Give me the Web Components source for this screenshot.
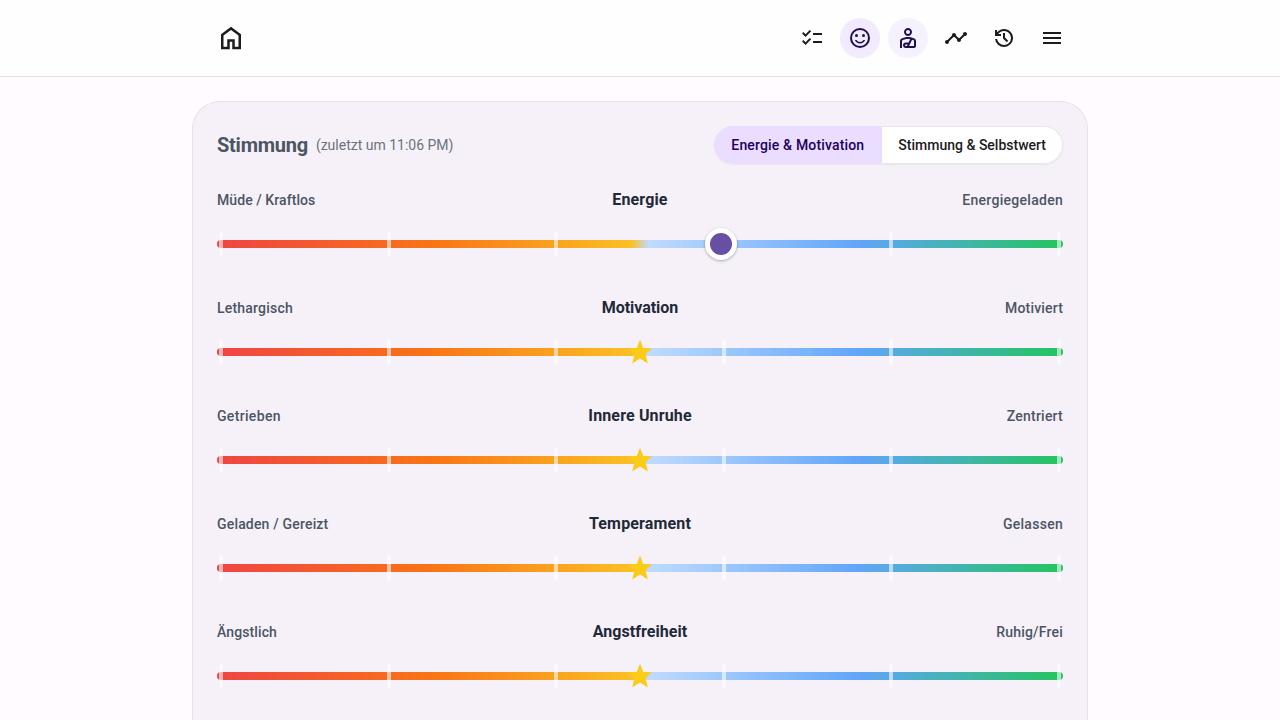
<!DOCTYPE html>
<html lang="de">
<head>
<meta charset="utf-8">
<title>Stimmung</title>
<style>
html,body{margin:0;height:100%;overflow:hidden}
body{background:#fffbff;font-family:Roboto,sans-serif;font-size:16px;line-height:24px;color:#1c1b1f}
</style>
</head>
<body>
<mood-app></mood-app>
<script>
const ICONS = {
  home: ['0 -960 960 960', '<path d="M240-200h120v-240h240v240h120v-360L480-740 240-560v360Zm-80 80v-480l320-240 320 240v480H520v-240h-80v240H160Z"/>'],
  checklist: ['0 -960 960 960', '<path d="M222-200 80-342l56-56 85 85 170-170 56 57-225 226Zm0-320L80-662l56-56 85 85 170-170 56 57-225 226Zm298 240v-80h360v80H520Zm0-320v-80h360v80H520Z"/>'],
  mood: ['0 0 24 24', '<circle cx="15.5" cy="9.5" r="1.5"/><circle cx="8.5" cy="9.5" r="1.5"/><path d="M12 16c-1.48 0-2.75-.81-3.45-2H6.88a5.495 5.495 0 0 0 10.24 0h-1.67c-.69 1.19-1.97 2-3.45 2z"/><circle cx="12" cy="12" r="9" fill="none" stroke="currentColor" stroke-width="2"/>'],
  injury: ['0 0 24 24', '<path d="M12,10c2.21,0,4-1.79,4-4s-1.79-4-4-4C9.79,2,8,3.79,8,6S9.79,10,12,10z M12,4c1.1,0,2,0.9,2,2s-0.9,2-2,2s-2-0.9-2-2S10.9,4,12,4z"/><path d="M18.39,12.56C16.71,11.7,14.53,11,12,11s-4.71,0.7-6.39,1.56C4.61,13.07,4,14.1,4,15.22V22h2v-6.78c0-0.38,0.2-0.72,0.52-0.88C7.71,13.73,9.63,13,12,13c0.76,0,1.47,0.07,2.13,0.2l-1.55,3.3H9.75C8.23,16.5,7,17.73,7,19.25C7,20.77,8.23,22,9.75,22h2.18H18c1.1,0,2-0.9,2-2v-4.78C20,14.1,19.39,13.07,18.39,12.56z M10.94,20H9.75C9.34,20,9,19.66,9,19.25c0-0.41,0.34-0.75,0.75-0.75h1.89L10.94,20z M18,20h-4.85l2.94-6.27c0.54,0.2,1.01,0.41,1.4,0.61C17.8,14.5,18,14.84,18,15.22V20z"/>'],
  timeline: ['0 0 24 24', '<path d="M23 8c0 1.1-.9 2-2 2-.18 0-.35-.02-.51-.07l-3.56 3.55c.05.16.07.34.07.52 0 1.1-.9 2-2 2s-2-.9-2-2c0-.18.02-.36.07-.52l-2.55-2.55c-.16.05-.34.07-.52.07s-.36-.02-.52-.07l-4.55 4.56c.05.16.07.33.07.51 0 1.1-.9 2-2 2s-2-.9-2-2 .9-2 2-2c.18 0 .35.02.51.07l4.56-4.55C8.02 9.36 8 9.18 8 9c0-1.1.9-2 2-2s2 .9 2 2c0 .18-.02.36-.07.52l2.55 2.55c.16-.05.34-.07.52-.07s.36.02.52.07l3.55-3.56C19.02 8.35 19 8.18 19 8c0-1.1.9-2 2-2s2 .9 2 2z"/>'],
  history: ['0 -960 960 960', '<path d="M480-120q-138 0-240.5-91.5T122-440h82q14 104 92.5 172T480-200q117 0 198.5-81.5T760-480q0-117-81.5-198.5T480-760q-69 0-129 32t-101 88h110v80H120v-240h80v94q51-64 124.5-99T480-840q75 0 140.5 28.5t114 77q48.5 48.5 77 114T840-480q0 75-28.5 140.5t-77 114q-48.5 48.5-114 77T480-120Zm112-192L440-464v-216h80v184l128 128-56 56Z"/>'],
  menu: ['0 -960 960 960', '<path d="M120-240v-80h720v80H120Zm0-200v-80h720v80H120Zm0-200v-80h720v80H120Z"/>'],
  star: ['0 0 24 24', '<path d="M12 -.2l3.2 8.3 8.8.4-6.6 5.7 2.5 9.2-7.9-4.9-7.9 4.9 2.5-9.2L0 8.5l8.8-.4z"/>']
};

class AppIcon extends HTMLElement {
  connectedCallback() {
    const [box, body] = ICONS[this.getAttribute('name')];
    this.attachShadow({mode: 'open'}).innerHTML = `<style>
      :host{display:block;width:var(--icon-size,24px);height:var(--icon-size,24px)}
      svg{display:block;width:100%;height:100%;fill:currentColor;overflow:visible}
    </style><svg viewBox="${box}" aria-hidden="true">${body}</svg>`;
  }
}
customElements.define('app-icon', AppIcon);

class IconButton extends HTMLElement {
  connectedCallback() {
    this.attachShadow({mode: 'open'}).innerHTML = `<style>
      :host{display:block}
      button{all:unset;display:grid;place-items:center;width:40px;height:40px;border-radius:50%;background:var(--tone,transparent);color:var(--ink,#1c1b1f)}
    </style><button aria-label="${this.getAttribute('icon')}"><app-icon name="${this.getAttribute('icon')}"></app-icon></button>`;
  }
}
customElements.define('icon-button', IconButton);

class TopBar extends HTMLElement {
  connectedCallback() {
    this.attachShadow({mode: 'open'}).innerHTML = `<style>
      :host{display:block;box-sizing:border-box;height:77px;background:#fefefe;border-bottom:1px solid #e5e1e9}
      header{box-sizing:border-box;width:896px;height:76px;margin:0 auto;padding:0 16px 0 19px;display:flex;align-items:center;justify-content:space-between}
      nav{display:flex;gap:8px}
      .home{--icon-size:30px;width:40px;display:grid;place-items:center}
    </style><header><icon-button class="home" icon="home"></icon-button><nav>
      <icon-button icon="checklist"></icon-button>
      <icon-button icon="mood" style="--tone:#f2eaff;--ink:#21104a"></icon-button>
      <icon-button icon="injury" style="--tone:#f5f1ff;--ink:#21104a"></icon-button>
      <icon-button icon="timeline"></icon-button>
      <icon-button icon="history"></icon-button>
      <icon-button icon="menu"></icon-button>
    </nav></header>`;
  }
}
customElements.define('top-bar', TopBar);

class SegmentedTabs extends HTMLElement {
  connectedCallback() {
    this.attachShadow({mode: 'open'}).innerHTML = `<style>
      :host{display:flex;border-radius:20px;box-shadow:0 1px 2px rgba(0,0,0,.05)}
      ::slotted(button){appearance:none;box-sizing:border-box;margin:0;height:38px;padding:0 16px;border:1px solid #e5e7eb;background:#fff;color:#1c1b1f;font:500 14px/20px Roboto,sans-serif}
      ::slotted(button:first-child){width:168px;text-align:left;border-radius:19px 0 0 19px;letter-spacing:.16px;white-space:nowrap}
      ::slotted(button:last-child){border-radius:0 19px 19px 0;border-left:0}
      ::slotted(button[aria-pressed=true]){background:#eaddff;border-color:#eaddff;color:#21005d}
    </style><slot></slot>`;
  }
}
customElements.define('segmented-tabs', SegmentedTabs);

class MoodSlider extends HTMLElement {
  connectedCallback() {
    const value = this.getAttribute('value');
    const [lowGap, titleGap, highGap] = this.getAttribute('tracking').split(' ');
    const marker = value
      ? `<span class="thumb" style="left:${value}px"></span>`
      : '<app-icon class="star" name="star"></app-icon>';
    this.attachShadow({mode: 'open'}).innerHTML = `<style>
      :host{display:block;height:76px}
      .labels{display:grid;grid-template-columns:1fr auto 1fr;align-items:center;height:24px;color:#4b5563;font-weight:500;font-size:14px;line-height:20px}
      h3{margin:0;font-size:16px;line-height:24px;font-weight:700;color:#1f2937;letter-spacing:${titleGap}px}
      .low{letter-spacing:${lowGap}px}
      .end{text-align:right;letter-spacing:${highGap}px}
      .rail{position:relative;height:32px;margin-top:16px;display:flex;align-items:center}
      .track{width:100%;height:8px;border-radius:4px;background:linear-gradient(to right,#ef4444 0%,#f97316 25%,#fbbf24 49%,#bfdbfe 51%,#60a5fa 76%,#22c55e 100%)}
      .ticks{position:absolute;inset:4px 2px;display:flex;justify-content:space-between}
      .ticks i{width:4px;border-radius:2px;background:rgba(255,255,255,.6)}
      .thumb{position:absolute;top:0;box-sizing:border-box;width:32px;height:32px;border-radius:50%;border:5px solid #fff;background:#6750a4;box-shadow:0 1px 3px rgba(0,0,0,.3)}
      .star{position:absolute;left:50%;top:4px;margin-left:-12px;color:#facc15}
    </style><div class="labels"><span class="low">${this.getAttribute('low')}</span><h3><slot></slot></h3><span class="end">${this.getAttribute('high')}</span></div>
    <div class="rail"><div class="track"></div><div class="ticks"><i></i><i></i><i></i><i></i><i></i><i></i></div>${marker}</div>`;
  }
}
customElements.define('mood-slider', MoodSlider);

class MoodCard extends HTMLElement {
  connectedCallback() {
    this.attachShadow({mode: 'open'}).innerHTML = `<style>
      :host{display:block;box-sizing:border-box;width:896px;height:619px;margin:24px auto 0;padding:24px 24px 0;background:#f6f1f9;border:1px solid #e5e1e9;border-bottom:0;border-radius:28px 28px 0 0}
      .head{display:flex;justify-content:space-between;align-items:center;height:38px}
      .title{display:flex;align-items:center;gap:8px}
      h2{margin:0;font-size:20px;line-height:28px;font-weight:700;color:#4b5563;letter-spacing:-.25px}
      small{font-size:14px;line-height:20px;color:#6b7280}
      .list{display:grid;gap:32px;margin-top:24px}
    </style><div class="head"><div class="title"><h2>Stimmung</h2><small>(zuletzt um 11:06 PM)</small></div>
    <segmented-tabs><button aria-pressed="true">Energie &amp; Motivation</button><button>Stimmung &amp; Selbstwert</button></segmented-tabs></div>
    <div class="list"><slot></slot></div>`;
  }
}
customElements.define('mood-card', MoodCard);

class MoodApp extends HTMLElement {
  connectedCallback() {
    this.attachShadow({mode: 'open'}).innerHTML = `<style>:host{display:block}</style>
    <top-bar></top-bar>
    <mood-card>
      <mood-slider low="Müde / Kraftlos" high="Energiegeladen" tracking=".07 .14 .28" value="488">Energie</mood-slider>
      <mood-slider low="Lethargisch" high="Motiviert" tracking=".2 -.05 .17">Motivation</mood-slider>
      <mood-slider low="Getrieben" high="Zentriert" tracking=".33 .14 .22">Innere Unruhe</mood-slider>
      <mood-slider low="Geladen / Gereizt" high="Gelassen" tracking=".18 .15 .28">Temperament</mood-slider>
      <mood-slider low="Ängstlich" high="Ruhig/Frei" tracking=".11 .05 .2">Angstfreiheit</mood-slider>
    </mood-card>`;
  }
}
customElements.define('mood-app', MoodApp);
</script>
</body>
</html>
